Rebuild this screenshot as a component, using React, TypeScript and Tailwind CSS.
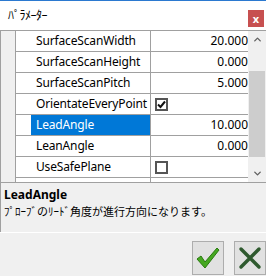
import { ChevronDown, ChevronUp } from 'lucide-react';

type Row = {
  name: string;
  value?: string;
  check?: boolean;
  selected?: boolean;
};

const rows: Row[] = [
  { name: 'SurfaceScanWidth', value: '20.000' },
  { name: 'SurfaceScanHeight', value: '0.000' },
  { name: 'SurfaceScanPitch', value: '5.000' },
  { name: 'OrientateEveryPoint', check: true },
  { name: 'LeadAngle', value: '10.000', selected: true },
  { name: 'LeanAngle', value: '0.000' },
  { name: 'UseSafePlane', check: false },
];

function CheckBox({ checked }: { checked: boolean }) {
  return (
    <span className="ml-[4px] flex h-[13px] w-[13px] items-center justify-center border-2 border-[#555555] bg-white">
      {checked && (
        <svg width="9" height="9" viewBox="0 0 9 9">
          <path d="M1 4.5 L3.5 7 L8 1.5" fill="none" stroke="#111" strokeWidth="2" />
        </svg>
      )}
    </span>
  );
}

export default function App() {
  return (
    <div
      className="flex h-[276px] w-[266px] flex-col overflow-hidden bg-[#f0f0f0] text-[12px] text-black"
      style={{ fontFamily: '"Noto Sans", "Noto Sans CJK JP", sans-serif' }}
    >
      {/* Title bar */}
      <div className="h-px bg-[#2b79d0]" />
      <div className="flex h-[29px] items-center justify-between bg-white pl-[8px] pr-[2px]">
        <span className="text-[12px] leading-none tracking-[-0.5px]">ﾊﾟﾗﾒｰﾀｰ</span>
        <div className="mt-[5px] flex h-[17px] w-[16px] items-center justify-center bg-[#c75050] text-[11px] font-bold leading-none text-white">
          x
        </div>
      </div>

      {/* Property grid */}
      <div className="flex h-[153px] border-y border-[#a0a0a0] bg-white">
        <div className="flex w-[248px] border-l border-[#a0a0a0]">
          <div className="w-[15px] border-r border-[#a0a0a0] bg-[#f0f0f0]" />
          <div className="flex flex-1 flex-col">
            {rows.map((row) => (
              <div key={row.name} className="flex h-[21px] border-b border-[#a0a0a0]">
                <div
                  className={`ml-[15px] flex w-[119px] items-center pl-[5px] leading-none tracking-[-0.15px] ${
                    row.selected ? 'bg-[#0078d7] text-white' : ''
                  }`}
                >
                  {row.name}
                </div>
                <div className="flex flex-1 items-center justify-end border-l border-[#a0a0a0] leading-none">
                  {row.value !== undefined ? (
                    <span>{row.value}</span>
                  ) : (
                    <span className="flex flex-1 justify-start">
                      <CheckBox checked={!!row.check} />
                    </span>
                  )}
                </div>
              </div>
            ))}
            <div className="flex flex-1">
              <div className="ml-[15px] w-[119px]" />
              <div className="border-l border-[#a0a0a0]" />
            </div>
          </div>
        </div>
        <div className="flex w-[18px] flex-col items-center bg-[#f0f0f0]">
          <div className="flex h-[17px] w-full items-center justify-center">
            <ChevronUp size={11} strokeWidth={3} color="#606060" />
          </div>
          <div className="mt-[23px] h-[86px] w-[16px] bg-[#cdcdcd]" />
          <div className="flex-1" />
          <div className="flex h-[17px] w-full items-center justify-center">
            <ChevronDown size={11} strokeWidth={3} color="#606060" />
          </div>
        </div>
      </div>

      {/* Description */}
      <div className="flex h-[49px] flex-col border-l border-[#a0a0a0] pl-[3px] pt-[5px]">
        <span className="text-[12px] font-bold leading-[14px]">LeadAngle</span>
        <span className="mt-[3px] text-[11px] leading-[14px]">ﾌﾟﾛｰﾌﾞのﾘｰﾄﾞ角度が進行方向になります。</span>
      </div>
      <div className="h-px bg-white" />

      {/* Buttons */}
      <div className="flex flex-1 items-start justify-end gap-[10px] pt-[8px]">
        <button className="flex h-[34px] w-[32px] items-center justify-center border border-[#adadad] bg-[#e1e1e1]">
          <svg width="26" height="24" viewBox="0 0 26 24">
            <path d="M2 13 L6 10 L10 16 L22 2 L24 4 L10 22 Z" fill="#46a821" stroke="#2a7a10" strokeWidth="1" />
          </svg>
        </button>
        <button className="flex h-[34px] w-[32px] items-center justify-center border border-[#adadad] bg-[#e1e1e1]">
          <svg width="24" height="24" viewBox="0 0 24 24">
            <path d="M3 3 L21 21 M21 3 L3 21" stroke="#2f5a2f" strokeWidth="3.5" strokeLinecap="round" />
          </svg>
        </button>
      </div>
    </div>
  );
}
